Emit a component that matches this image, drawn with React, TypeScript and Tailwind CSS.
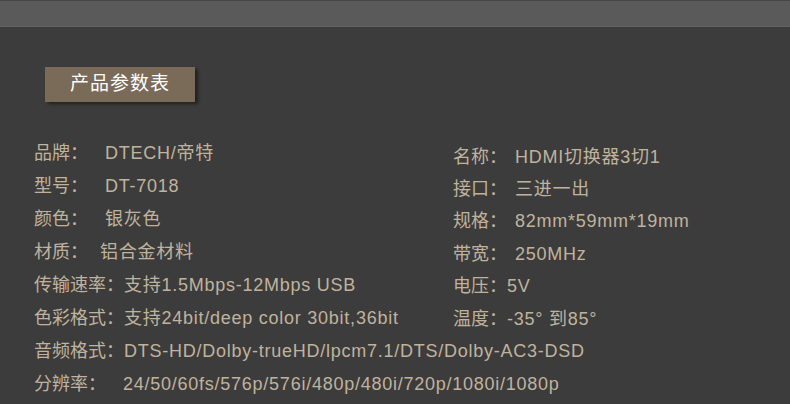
const left: [string, string, number][] = [
  ["品牌：", "DTECH/帝特", 71],
  ["型号：", "DT-7018", 71],
  ["颜色：", "银灰色", 71],
  ["材质：", "铝合金材料", 66],
  ["传输速率：", "支持1.5Mbps-12Mbps USB", 90],
  ["色彩格式：", "支持24bit/deep color 30bit,36bit", 90],
];

const right: [string, string, number][] = [
  ["名称：", "HDMI切换器3切1", 62],
  ["接口：", "三进一出", 62],
  ["规格：", "82mm*59mm*19mm", 62],
  ["带宽：", "250MHz", 62],
  ["电压：", "5V", 54],
  ["温度：", "-35° 到85°", 54],
];

const full: [string, string, number][] = [
  ["音频格式：", "DTS-HD/Dolby-trueHD/lpcm7.1/DTS/Dolby-AC3-DSD", 90],
  ["分辨率：", "24/50/60fs/576p/576i/480p/480i/720p/1080i/1080p", 89],
];

function Row({ label, value, w, h }: { label: string; value: string; w: number; h: string }) {
  return (
    <div className={`flex items-center whitespace-nowrap ${h}`}>
      <span className="shrink-0 tracking-normal" style={{ width: w }}>
        {label}
      </span>
      <span className="tracking-[0.75px]">{value}</span>
    </div>
  );
}

export default function App() {
  return (
    <div
      className="h-[404px] w-[790px] overflow-hidden bg-[#3c3c3c] text-[18px] text-[#c0b39e]"
      style={{ fontFamily: '"Liberation Sans", "Noto Sans CJK SC", sans-serif' }}
    >
      <div className="h-px bg-[#474747]" />
      <div className="h-[26px] border-b border-[#636363] bg-[#5a5a5a]" />

      <div className="pl-[45px] pt-[40px]">
        <div className="flex h-[35px] w-[150px] items-center justify-center bg-[#7a6a58] text-[19px] tracking-[1px] text-white shadow-[3px_2px_3px_rgba(0,0,0,0.45)]">
          产品参数表
        </div>
      </div>

      <div className="mt-[35px] grid grid-cols-[419px_1fr] pl-[34px]">
        <div>
          {left.map(([l, v, w]) => (
            <Row key={l} label={l} value={v} w={w} h="h-[33px]" />
          ))}
        </div>
        <div className="pt-[4px]">
          {right.map(([l, v, w]) => (
            <Row key={l} label={l} value={v} w={w} h="h-[32.4px]" />
          ))}
        </div>
      </div>

      <div className="pl-[34px]">
        {full.map(([l, v, w]) => (
          <Row key={l} label={l} value={v} w={w} h="h-[33px]" />
        ))}
      </div>
    </div>
  );
}
